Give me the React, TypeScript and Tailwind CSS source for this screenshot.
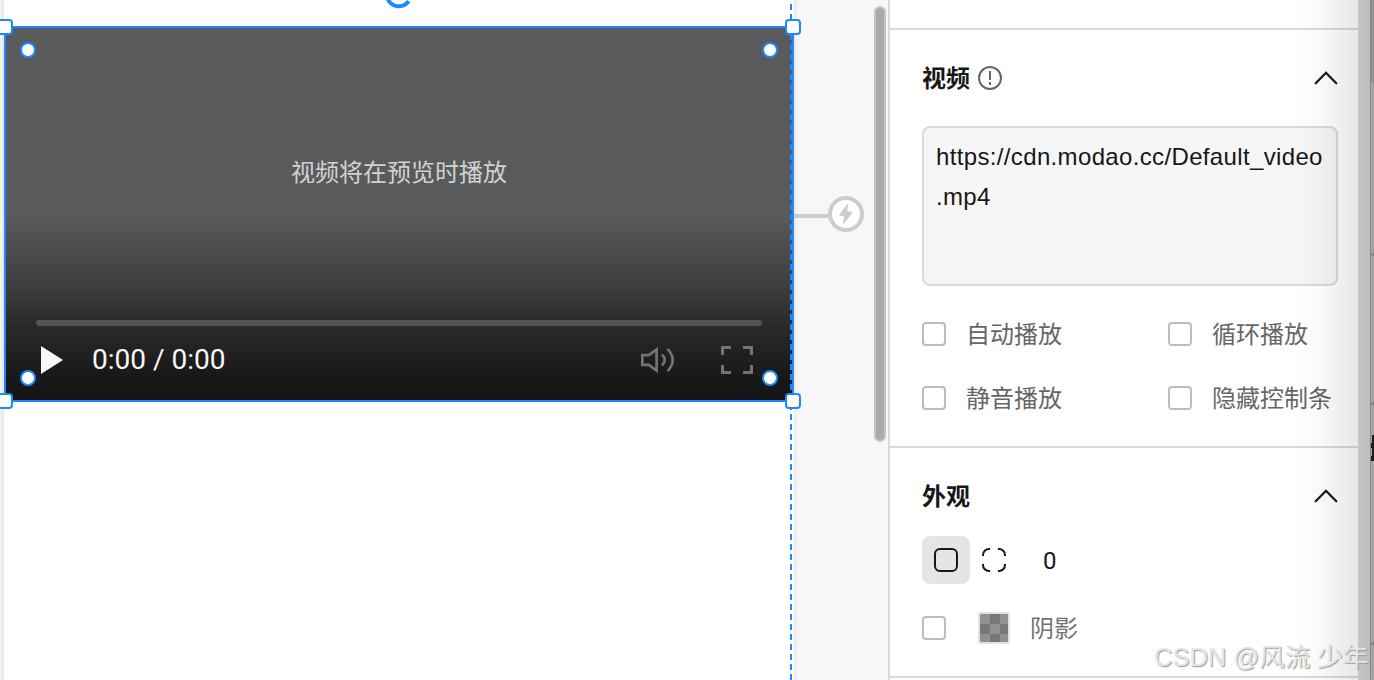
import type { ReactNode } from "react";

const cjk = "font-['Noto_Sans_CJK_SC',sans-serif]";

function Corner({ className }: { className: string }) {
  return (
    <span className={`absolute z-20 size-4 rounded-[4px] border-2 border-[#1f87ff] bg-white ${className}`} />
  );
}

function RadiusDot({ className }: { className: string }) {
  return (
    <span className={`absolute z-20 size-4 rounded-full border-2 border-[#1f87ff] bg-white ${className}`} />
  );
}

function Chevron() {
  return (
    <svg width="24" height="24" viewBox="0 0 24 24" fill="none" stroke="#171717" strokeWidth="2.3" strokeLinecap="round">
      <path d="M1.700 17.200 12 6.800l10.300 10.400" />
    </svg>
  );
}

function Box() {
  return <span className="size-6 shrink-0 rounded-[4px] border-2 border-[#bdbdbd] bg-white" />;
}

function Option({ label }: { label: string }) {
  return (
    <label className="flex h-8 items-center gap-5">
      <Box />
      <span className="-translate-y-px text-2xl leading-8 whitespace-nowrap text-[#666]">{label}</span>
    </label>
  );
}

function SectionTitle({ title, children }: { title: string; children?: ReactNode }) {
  return (
    <div className="flex h-8 items-center justify-between">
      <div className="flex items-center gap-2">
        <h2 className="-translate-y-px text-2xl leading-8 font-semibold text-[#171717]">{title}</h2>
        {children}
      </div>
      <Chevron />
    </div>
  );
}

function Player() {
  return (
    <div className="relative mt-[26px] flex h-[376px] w-[790px] flex-col border-2 border-[#1f87ff] bg-[linear-gradient(to_bottom,#595a5b_0px,#595a5b_188px,#4d4e4f_218px,#3a3b3b_264px,#292929_300px,#191919_346px,#151515_372px)]">
      <Corner className="-top-[9px] -left-[9px]" />
      <Corner className="-top-[9px] -right-[9px]" />
      <Corner className="-bottom-[9px] -left-[9px]" />
      <Corner className="-right-[9px] -bottom-[9px]" />
      <RadiusDot className="top-[14px] left-[14px]" />
      <RadiusDot className="top-[14px] right-[14px]" />
      <RadiusDot className="bottom-[14px] left-[14px]" />
      <RadiusDot className="right-[14px] bottom-[14px]" />
      <p className="mt-[127px] h-8 text-center text-2xl leading-8 text-[#d2d2d2]">视频将在预览时播放</p>
      <div className="mx-[30px] mt-[133px] h-1.5 rounded-full bg-[#535455]" />
      <div className="mt-[14px] mr-[39px] ml-[35px] flex h-10 items-center">
        <svg width="22" height="28" viewBox="0 0 22 28" fill="#f7f7f7">
          <path d="M0 0 22 14 0 28Z" />
        </svg>
        <span className="ml-[29px] font-['Roboto',sans-serif] text-[28px] leading-10 whitespace-pre text-[#f7f7f7]">0:00 / 0:00</span>
        <svg className="ml-auto" width="36" height="28" viewBox="0 0 36 28" fill="none" stroke="#737373" strokeWidth="2.7">
          <path d="M2.300 9.200h6.500l7.800-5.800v21.200L8.800 18.800H2.300Z" />
          <path d="M22 8.500q5.500 5.500 0 11" />
          <path d="M27.500 2.800q10.500 11.200 0 22.400" />
        </svg>
        <svg className="ml-[45px]" width="32" height="28" viewBox="0 0 32 28" fill="none" stroke="#737373" strokeWidth="3">
          <path d="M1.500 9V1.500H10M22 1.500h8.500V9M1.500 19v7.500H10M22 26.500h8.500V19" />
        </svg>
      </div>
    </div>
  );
}

function Canvas() {
  return (
    <main className="flex w-[888px] shrink-0 bg-[#f7f7f7]">
      <div className="w-1 shrink-0 bg-linear-to-r from-[#f5f5f5] to-[#e6e6e6]" />
      <section className="relative h-[680px] w-[790px] shrink-0 bg-white">
        <Player />
        <svg className="absolute top-0 left-[380px] z-10" width="30" height="10" viewBox="0 0 30 10" fill="none" stroke="#1f87ff" strokeWidth="4">
          <path d="M3.500-2A12 12 0 0 0 24.700 1.200" />
        </svg>
        <div className="absolute top-0 left-[786px] z-10 h-[680px] w-0.5 bg-[repeating-linear-gradient(to_bottom,transparent_0px,transparent_4px,#1f87ff_4px,#1f87ff_10px)]" />
      </section>
      <div className="flex w-20 shrink-0 bg-[linear-gradient(to_right,#e9e9e9_0px,#f1f1f1_2px,#f7f7f7_5px)] pt-[196px]">
        <div className="mt-[18px] h-1 w-[34px] shrink-0 bg-[#c8cdcf]" />
        <div className="flex size-9 shrink-0 items-center justify-center rounded-full border-4 border-[#c8cdcf] bg-white">
          <svg width="14" height="22" viewBox="0 0 14 22" fill="#c8cdcf">
            <path d="M8 1.200Q9.300.3 9 2L8.300 8.300l4.600.5q1 .2.4 1.200L5.200 20.600q-1.200 1-1-.5l.8-6.800-3.800-.4q-1.100-.3-.5-1.300Z" />
          </svg>
        </div>
      </div>
      <div className="mt-1.5 h-[436px] w-3 shrink-0 rounded-full border-2 border-[#c4c4c4] bg-[#ababab]" />
    </main>
  );
}

function Panel() {
  return (
    <aside className="relative flex h-[680px] w-[470px] shrink-0 flex-col border-l-2 border-[#dadada] bg-white">
      <div className="h-7 shrink-0" />
      <section className="h-[418px] shrink-0 border-t-2 border-[#dadada] pt-8 pr-5 pl-8">
        <SectionTitle title="视频">
          <svg width="24" height="24" viewBox="0 0 24 24" fill="none" stroke="#666" strokeWidth="2">
            <circle cx="12" cy="12" r="11" />
            <path d="M12 5v9M12 16v3" />
          </svg>
        </SectionTitle>
        <div className="mt-8 h-40 w-[416px] rounded-lg border-2 border-[#dadada] bg-[#f6f6f6] px-3 pt-[9px] font-['Liberation_Sans',Arial,sans-serif] text-2xl leading-10 tracking-[0.35px] whitespace-nowrap text-[#171717]">
          https://cdn.modao.cc/Default_video<br />.mp4
        </div>
        <div className="mt-8 grid grid-cols-[246px_1fr] gap-y-8">
          <Option label="自动播放" />
          <Option label="循环播放" />
          <Option label="静音播放" />
          <Option label="隐藏控制条" />
        </div>
      </section>
      <section className="h-[230px] shrink-0 border-t-2 border-[#dadada] pt-8 pr-5 pl-8">
        <SectionTitle title="外观" />
        <div className="mt-6 flex h-12 items-center">
          <span className="flex size-12 items-center justify-center rounded-lg bg-[#e5e5e5]">
            <span className="size-6 rounded-[6px] border-2 border-[#171717]" />
          </span>
          <svg className="ml-3" width="24" height="24" viewBox="0 0 24 24" fill="none" stroke="#171717" strokeWidth="2">
            <path d="M1 8V7a6 6 0 0 1 6-6h1M16 1h1a6 6 0 0 1 6 6v1M23 16v1a6 6 0 0 1-6 6h-1M8 23H7a6 6 0 0 1-6-6v-1" />
          </svg>
          <span className="ml-[37px] translate-y-px font-['Roboto',sans-serif] text-2xl text-[#171717]">0</span>
        </div>
        <div className="mt-7 flex h-8 items-center">
          <Box />
          <span className="ml-8 grid size-8 grid-cols-[10px_10px_8px] grid-rows-[10px_10px_8px] overflow-hidden rounded-[3px] border-2 border-[#e2e2e2]">
            {Array.from({ length: 9 }, (_, i) => (
              <span key={i} className={i % 2 ? "bg-[#787878]" : "bg-[#919191]"} />
            ))}
          </span>
          <span className="ml-5 -translate-y-px text-2xl leading-8 text-[#737373]">阴影</span>
        </div>
      </section>
      <div className="h-1 shrink-0 border-t-2 border-[#dadada]" />
      <div className="pointer-events-none absolute inset-y-0 right-0 w-16 bg-[linear-gradient(to_right,rgba(0,0,0,0)_0%,rgba(0,0,0,0.025)_40%,rgba(0,0,0,0.06)_70%,rgba(0,0,0,0.095)_100%)]" />
    </aside>
  );
}

function WindowEdge() {
  return (
    <div className="flex w-4 shrink-0">
      <div className="w-3 bg-linear-to-r from-[#c5c5c5] to-[#bdbdbd]" />
      <div className="flex w-1 flex-col border-l border-[#888] bg-[#a3a3a3]">
        <div className="h-[83px] bg-[#939393]" />
        <div className="mt-[170px] h-[3px] bg-[#8b8b8b]" />
        <div className="mt-[146px] h-[3px] bg-[#8b8b8b]" />
        <svg className="mt-[30px]" width="3" height="26" viewBox="0 0 3 26" fill="#1c1c1c">
          <path d="M1 0h2v26H0v-5h1v-8H0V8h1Z" />
        </svg>
        <div className="mt-[181px] h-[3px] bg-[#8b8b8b]" />
      </div>
    </div>
  );
}

export default function App() {
  return (
    <div className={`relative flex h-[680px] w-[1374px] overflow-hidden bg-white ${cjk}`}>
      <Canvas />
      <Panel />
      <WindowEdge />
      <span className="absolute top-[641px] left-[1154px] z-30 font-['Liberation_Sans','Noto_Sans_CJK_SC',sans-serif] text-[25.5px] leading-8 whitespace-pre text-[#e6e6e6] [text-shadow:1px_1px_1px_#999]">CSDN @风流 少年</span>
    </div>
  );
}
